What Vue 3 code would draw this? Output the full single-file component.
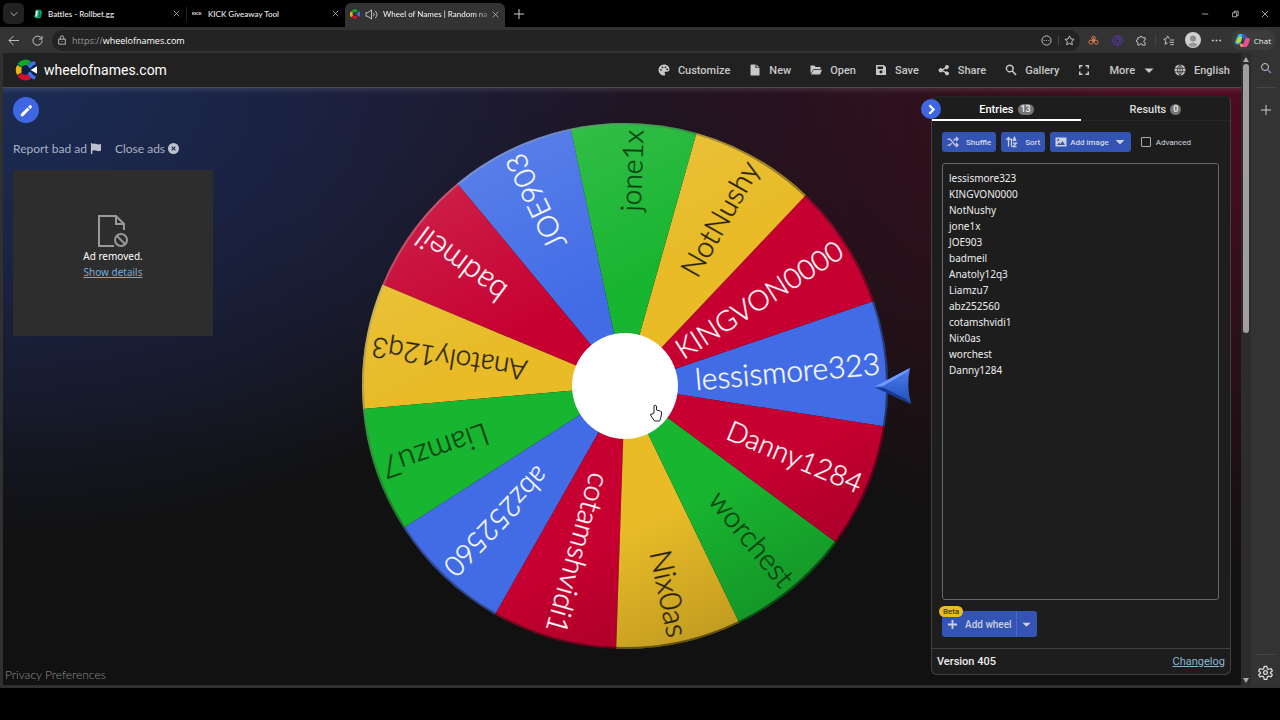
<script setup>
import { ref, computed } from 'vue'

const entries = ref(
  ['lessismore323', 'KINGVON0000', 'NotNushy', 'jone1x', 'JOE903', 'badmeil', 'Anatoly12q3', 'Liamzu7', 'abz252560', 'cotamshvidi1', 'Nix0as', 'worchest', 'Danny1284'].join('\n')
)
const address = ref('wheelofnames.com')
const advanced = ref(false)
const textSizes = [30, 28, 29, 28, 29, 31, 28, 31, 28, 29, 30, 29, 28]
const palette = ['blue', 'red', 'yellow', 'green']
const cx = 625
const cy = 386
const radius = 263
const offset = -5

function point(deg) {
  const a = (deg * Math.PI) / 180
  return `${(cx + radius * Math.cos(a)).toFixed(2)} ${(cy + radius * Math.sin(a)).toFixed(2)}`
}

const slices = computed(() => {
  const names = entries.value.split('\n').filter(Boolean)
  const step = 360 / names.length
  return names.map((name, i) => {
    const mid = offset - i * step
    const last = i === names.length - 1
    return {
      name,
      tone: last ? 'red' : palette[i % 4],
      size: textSizes[i] || 30,
      turn: `rotate(${mid.toFixed(2)} ${cx} ${cy})`,
      d: `M${cx} ${cy}L${point(mid - step / 2)}A${radius} ${radius} 0 0 1 ${point(mid + step / 2)}Z`
    }
  })
})

const nav = [
  { label: 'Customize', d: 'M12 1a11 11 0 0 0 0 22c1.500 0 2.500-1 2.500-2.500 0-1.700-1.300-2-1.300-3.200 0-1 .8-1.800 1.800-1.800h3c3 0 5-2 5-4.500C23 5.500 18.500 1 12 1ZM6 13.500a1.800 1.800 0 1 1 0-3.600 1.800 1.800 0 0 1 0 3.600Zm3-5a1.800 1.800 0 1 1 0-3.600 1.800 1.800 0 0 1 0 3.600Zm6 0a1.800 1.800 0 1 1 0-3.600 1.800 1.800 0 0 1 0 3.600Zm3.500 4a1.800 1.800 0 1 1 0-3.600 1.800 1.800 0 0 1 0 3.600Z' },
  { label: 'New', d: 'M5 1h8v7h8v15H3V3a2 2 0 0 1 2-2Zm10 0L21 7h-6Z' },
  { label: 'Open', d: 'M1 3h8l2 3h10v4H7L2 18H1Zm6 8.500h17L20 21H2Z' },
  { label: 'Save', d: 'M2 2h15.500L22 6.500V22H2Zm3 3v5h11V5Zm7 7.500a3.200 3.200 0 1 0 0 6.400 3.200 3.200 0 0 0 0-6.400Z' },
  { label: 'Share', d: 'M18 2a4 4 0 0 0-3.900 4.900L8.500 10A4 4 0 1 0 8.500 15l5.600 3a4 4 0 1 0 1.300-2.300L9.800 12.600l5.500-3.300A4 4 0 1 0 18 2Z' },
  { label: 'Gallery', d: 'M9.500 1a8 8 0 1 0 4.300 14.700L21 23l2.200-2.200-7-7.200A8 8 0 0 0 9.500 1Zm0 2.800a5.200 5.200 0 1 1 0 10.400 5.200 5.200 0 0 1 0-10.400Z' }
]
</script>

<template>
  <div class="desktop">
    <div class="window">
      <div class="tabstrip">
        <button class="tab-menu" aria-label="Tab actions"><svg viewBox="0 0 12 12" class="line"><path d="M2 4l4 4 4-4" /></svg></button>
        <div class="tab tab-one">
          <svg class="fav" viewBox="0 0 12 12"><path d="M3 1h6l2 3-2 7H4L1 9l2-3Z" fill="#14a578" /><path d="M3 3l3-1-1 6-2 2Z" fill="#c9f2df" /><path d="M8 2v8" stroke="#06553c" /></svg>
          <span>Battles - Rollbet.gg</span>
          <button aria-label="Close tab"><svg viewBox="0 0 10 10" class="line"><path d="M1 1l8 8M9 1L1 9" /></svg></button>
        </div>
        <div class="tab tab-two">
          <span class="kick">KICK</span>
          <span>KICK Giveaway Tool</span>
          <button aria-label="Close tab"><svg viewBox="0 0 10 10" class="line"><path d="M1 1l8 8M9 1L1 9" /></svg></button>
        </div>
        <div class="tab active">
          <svg class="fav" viewBox="0 0 24 24"><path d="M5 18A9 9 0 0 1 5 7" class="arc" stroke="#eeb211" /><path d="M6 6a9 9 0 0 1 11 0" class="arc" stroke="#12a52a" /><path d="M6 18a9 9 0 0 0 11 0" class="arc" stroke="#d50f25" /><path d="M24 5v14l-9-7Z" fill="#4570e8" /></svg>
          <svg class="speaker" viewBox="0 0 14 12"><path d="M1 4h2l4-3v10L3 8H1ZM9 4q2 2 0 4M11 2q4 4 0 8" /></svg>
          <span class="fade">Wheel of Names | Random na</span>
          <button aria-label="Close tab"><svg viewBox="0 0 10 10" class="line"><path d="M1 1l8 8M9 1L1 9" /></svg></button>
        </div>
        <button class="plus" aria-label="New tab"><svg viewBox="0 0 10 10" class="line"><path d="M5 0v10M0 5h10" /></svg></button>
        <div class="controls">
          <button aria-label="Minimize"><svg viewBox="0 0 10 10" class="line"><path d="M1 5h8" /></svg></button>
          <button aria-label="Restore"><svg viewBox="0 0 10 10" class="line"><path d="M2 3.500h5v5H2ZM4 3V1.500h5V7H7.500" /></svg></button>
          <button aria-label="Close"><svg viewBox="0 0 10 10" class="line"><path d="M1 1l8 8M9 1L1 9" /></svg></button>
        </div>
      </div>

      <div class="toolbar">
        <button class="tool" aria-label="Back"><svg viewBox="0 0 12 12" class="line"><path d="M12 6H1M6 1L1 6l5 5" /></svg></button>
        <button class="tool reload" aria-label="Reload"><svg viewBox="0 0 12 12" class="line"><path d="M10.500 4A5 5 0 1 0 11 6M11 1v3.500H7.500" /></svg></button>
        <div class="address">
          <svg viewBox="0 0 12 12" class="line lock"><path d="M2 5h8v6H2ZM4 5V3a2 2 0 0 1 4 0v2M6 7.500v1" /></svg>
          <label for="url">https://</label><input id="url" v-model="address" type="text" />
          <button class="tool" aria-label="More options"><svg viewBox="0 0 12 12" class="line"><circle cx="6" cy="6" r="5" /><path d="M3 6h1M5.500 6h1M8 6h1" /></svg></button>
          <i class="bar"></i>
          <button class="tool" aria-label="Favorite"><svg viewBox="0 0 12 12" class="line"><path d="M6 1l1.500 3.300 3.500.4-2.600 2.400.7 3.600L6 9l-3.100 1.700.7-3.600L1 4.700l3.500-.4Z" /></svg></button>
        </div>
        <div class="extensions">
          <button class="tool" aria-label="Cookie extension"><svg viewBox="0 0 12 12" class="line orange"><circle cx="6" cy="3.500" r="2" /><circle cx="3.200" cy="7.800" r="2.200" /><circle cx="8.800" cy="7.800" r="2.200" /><path d="M6 3v5M4 6h4" /></svg></button>
          <button class="tool" aria-label="Spiral extension"><svg viewBox="0 0 12 12" class="line violet"><circle cx="6" cy="6" r="5" /><path d="M8.500 3v4a2.500 2.500 0 1 1-1-3" /></svg></button>
          <button class="tool" aria-label="Extensions"><svg viewBox="0 0 12 12" class="line"><path d="M2 3h2a1.500 1.500 0 0 1 3 0h3v2.500a1.500 1.500 0 0 0 0 3V11H7a1.500 1.500 0 0 0-3 0H2V8a1.500 1.500 0 0 1 0-3Z" /></svg></button>
          <i class="bar"></i>
          <button class="tool" aria-label="Favorites"><svg viewBox="0 0 12 12" class="line"><path d="M7 4.200L5 1 3.700 4.200.8 4.600l2.200 2-.6 3.600L5 8.500M7.500 5.500H12M7 8h5M8 10.500h4" /></svg></button>
          <button class="tool profile" aria-label="Profile"><svg viewBox="0 0 16 16"><circle cx="8" cy="8" r="8" fill="#d0d0d0" /><circle cx="8" cy="6.500" r="3" fill="#8b8b8b" /><path d="M3 13q5-5 10 0-5 4-10 0Z" fill="#999" /></svg></button>
          <button class="tool" aria-label="Settings and more"><svg viewBox="0 0 12 12"><path d="M1 5.200h2v1.600H1ZM5 5.200h2v1.600H5ZM9 5.200h2v1.600H9Z" fill="#ccc" /></svg></button>
          <button class="chat">
            <svg viewBox="0 0 16 16"><path d="M4 1h5Q7 3 6 8t-4 4Q-1 12 1 7T4 1Z" fill="#2bb7e8" /><path d="M4 4h4L6 10H1Z" fill="#b8dc38" /><path d="M9 1l2 4h3q3 0 1 5t-4 5H7q2-2 3-6t3-4Z" fill="#ec4f9d" /><path d="M8 1h2l2 4q-2 0-3 4Z" fill="#2459e6" /><path d="M5 11l4 1-1 3H7Q5 15 5 11Z" fill="#fa8b62" /></svg>
            Chat
          </button>
        </div>
      </div>

      <div class="viewport">
        <div class="page">
          <header class="site-head">
            <a class="brand" href="#">
              <svg viewBox="0 0 24 24"><circle cx="12" cy="12" r="12" fill="#0b2048" /><path d="M5 16A8 8 0 0 1 5 8" class="arc" stroke="#eeb211" /><path d="M5 7a8 8 0 0 1 11-2" class="arc" stroke="#12a52a" /><path d="M5 17a8 8 0 0 0 11 2" class="arc" stroke="#d50f25" /><path d="M17 6l5-2M17 18l5 3M15 9l3-3M15 15l3 3" stroke="#4570e8" stroke-width="4" /><path d="M24 8v8l-7-4Z" fill="#fff" /></svg>
              <span>wheelofnames.com</span>
            </a>
            <nav>
              <button v-for="item in nav" :key="item.label">
                <svg viewBox="0 0 24 24"><path :d="item.d" fill-rule="evenodd" /></svg>{{ item.label }}
              </button>
              <button aria-label="Fullscreen"><svg viewBox="0 0 24 24"><path d="M2 2h7v3H5v4H2ZM15 2h7v7h-3V5h-4ZM2 15h3v4h4v3H2ZM19 15h3v7h-7v-3h4Z" /></svg></button>
              <button>More<svg viewBox="0 0 24 24"><path d="M3 9h18l-9 9Z" /></svg></button>
              <button><svg viewBox="0 0 24 24"><circle cx="12" cy="12" r="11" /><path d="M1 8.500h22M1 15.500h22M12 1v22M12 1q-10 11 0 22M12 1q10 11 0 22" fill="none" stroke="#222" stroke-width="1.500" /></svg>English</button>
            </nav>
          </header>

          <main>
            <section class="left">
              <button class="edit" aria-label="Edit title"><svg viewBox="0 0 24 24"><path d="M3 17.500V21h3.500L17 10.500 13.500 7ZM14.500 6L18 9.500l2.400-2.400q1-1 0-2l-1.500-1.500q-1-1-2 0Z" /></svg></button>
              <div class="ad-links">
                <a href="#">Report bad ad<svg viewBox="0 0 12 12"><path d="M1 0h1.500v1q2-1 4.500 0t5 0v7.500q-2.500 1-5 0t-4.500 0V12H1Z" /></svg></a>
                <a href="#">Close ads<svg viewBox="0 0 12 12"><circle cx="6" cy="6" r="6" /><path d="M4 4l4 4M8 4L4 8" stroke="#1b294d" stroke-width="1.300" /></svg></a>
              </div>
              <div class="ad">
                <svg viewBox="0 0 32 34"><path d="M17 32H2V2h17l8 8v6M19 2v8h8" /><circle cx="24" cy="26" r="6" /><path d="M20 22l8 8" /></svg>
                <span>Ad removed.</span>
                <a href="#">Show details</a>
              </div>
              <a class="privacy" href="#">Privacy Preferences</a>
            </section>

            <section class="stage">
              <svg class="wheel" viewBox="350 111 571 550" role="img" aria-label="Wheel of names">
                <defs>
                  <linearGradient id="shade" x1="0.250" y1="0" x2="0.750" y2="1">
                    <stop offset="0" stop-color="#fff" stop-opacity="0.140" />
                    <stop offset="0.350" stop-color="#fff" stop-opacity="0" />
                    <stop offset="0.720" stop-color="#000" stop-opacity="0" />
                    <stop offset="1" stop-color="#000" stop-opacity="0.200" />
                  </linearGradient>
                  <linearGradient id="rim" x1="0" y1="0" x2="0.800" y2="0.800">
                    <stop offset="0" stop-color="#fff" stop-opacity="0.400" />
                    <stop offset="0.500" stop-color="#222" stop-opacity="0.400" />
                    <stop offset="1" stop-color="#000" stop-opacity="0.500" />
                  </linearGradient>
                  <linearGradient id="pointer" x1="0" y1="0" x2="0" y2="1">
                    <stop offset="0" stop-color="#4b7cf0" />
                    <stop offset="1" stop-color="#2350b8" />
                  </linearGradient>
                </defs>
                <g v-for="s in slices" :key="s.name" :class="s.tone">
                  <path :d="s.d" />
                </g>
                <circle :cx="cx" :cy="cy" :r="radius" fill="url(#shade)" />
                <circle :cx="cx" :cy="cy" r="262" fill="none" stroke="url(#rim)" stroke-width="2" />
                <g v-for="s in slices" :key="s.name" :class="s.tone">
                  <text :x="cx + 256" :y="cy" dy="0.350em" :font-size="s.size" :transform="s.turn">{{ s.name }}</text>
                </g>
                <circle :cx="cx" :cy="cy" r="53" fill="#fff" />
                <path d="M874 387L910 368Q906 386 911 404Z" fill="url(#pointer)" />
                <path d="M874 387L910 368L907 372L883 386Z" fill="#6f9aff" />
                <path d="M874 387L911 404L906 399L884 388Z" fill="#18398e" />
                <path d="M654 413v-7q1-2 2.500 0v4l4 1q1.500.5 1 3l-1 5-1 2h-5l-4-6q0-1.500 1.500-1Z" fill="#fff" stroke="#222" />
              </svg>
            </section>

            <aside class="panel">
              <button class="toggle" aria-label="Hide panel"><svg viewBox="0 0 12 12"><path d="M4 2l4 4-4 4" /></svg></button>
              <div class="panel-tabs">
                <button class="on">Entries <b>13</b></button>
                <button>Results <b>0</b></button>
              </div>
              <div class="panel-body">
                <div class="actions">
                  <button class="blue-btn"><svg viewBox="0 0 24 24" class="thick"><path d="M1 6h5l10 12h5M1 18h5l3-4M13 9l3-3h5M18 2l4 4-4 4M18 14l4 4-4 4" /></svg>Shuffle</button>
                  <button class="blue-btn"><svg viewBox="0 0 24 24" class="thick"><path d="M5 21V4M1 8l4-5 4 5M11 21V5M14 10l3-7 3 7M15 8h4M14 14h7l-7 7h7" /></svg>Sort</button>
                  <button class="blue-btn image"><svg viewBox="0 0 24 24"><path fill-rule="evenodd" d="M1 3h22v18H1Zm3 15h16l-5-8-4 6-3-3ZM6.500 6a2 2 0 1 0 0 4 2 2 0 0 0 0-4Z" /></svg>Add image<svg viewBox="0 0 24 24"><path d="M3 8h18l-9 9Z" /></svg></button>
                  <label class="advanced"><input v-model="advanced" type="checkbox" />Advanced</label>
                </div>
                <textarea v-model="entries" aria-label="Entries" spellcheck="false"></textarea>
                <div class="add">
                  <span class="beta">Beta</span>
                  <button class="add-main"><svg viewBox="0 0 12 12"><path d="M5 1h2v4h4v2H7v4H5V7H1V5h4Z" /></svg>Add wheel</button>
                  <button class="add-more" aria-label="More wheel options"><svg viewBox="0 0 24 24"><path d="M3 8h18l-9 9Z" /></svg></button>
                </div>
              </div>
              <footer><span>Version 405</span><a href="#">Changelog</a></footer>
            </aside>
          </main>
        </div>

        <div class="scroll"><i class="up"></i><i class="thumb"></i><i class="down"></i></div>
        <div class="rail">
          <button aria-label="Search"><svg viewBox="0 0 12 12" class="line"><circle cx="5" cy="5" r="3.500" /><path d="M7.500 7.500L11 11" stroke="#887be0" stroke-width="1.500" /></svg></button>
          <hr />
          <button aria-label="Add"><svg viewBox="0 0 12 12" class="line"><path d="M6 1v10M1 6h10" /></svg></button>
          <div class="spring"></div>
          <hr />
          <button class="gear" aria-label="Settings"><svg viewBox="0 0 24 24"><circle cx="12" cy="12" r="3" /><path d="M10 2h4l1 4 2 1 4-1 2 3.500-3 2.500v1l3 2.500-2 3.500-4-1-2 1-1 4h-4l-1-4-2-1-4 1-2-3.500L4 13v-1L1 9.500 3 6l4 1 2-1Z" /></svg></button>
        </div>
      </div>
    </div>
  </div>
</template>

<style>
body { margin: 0; background: #000; }
</style>

<style scoped>
* { box-sizing: border-box; }
button { border: 0; padding: 0; margin: 0; background: none; color: inherit; font: inherit; display: flex; align-items: center; justify-content: center; }
svg { display: block; flex: none; }
.desktop { height: 100vh; padding-bottom: 32px; background: #000; font-family: "Open Sans", "Noto Sans", sans-serif; color: #eee; }
.window { height: 100%; display: flex; flex-direction: column; }
.line { width: 10px; height: 10px; fill: none; stroke: #ccc; stroke-width: 1; }
.arc { fill: none; stroke-width: 6; }

.tabstrip { height: 27px; flex: none; display: flex; align-items: center; padding-left: 3px; font-family: Lato, sans-serif; font-size: 8px; background: #000; }
.tab-menu { width: 21px; height: 21px; border-radius: 5px; background: #222; }
.tab { display: flex; align-items: center; height: 24px; gap: 5px; white-space: nowrap; padding-right: 6px; }
.tab button { margin-left: auto; }
.tab button svg { width: 7px; height: 7px; }
.tab-one { width: 162px; padding-left: 9px; }
.tab-two { width: 159px; padding-left: 5px; border-left: 1px solid #222; height: 14px; }
.kick { width: 11px; font-size: 4px; }
.fav { width: 10px; height: 10px; }
.speaker { width: 13px; height: 11px; fill: none; stroke: #ccc; }
.active { width: 160px; background: #333; border-radius: 6px 6px 0 0; align-self: flex-end; padding: 0 7px 2px 5px; }
.fade { flex: none; mask-image: linear-gradient(90deg, #000 88%, #0005); }
.tabstrip span { font-weight: 500; }
.tabstrip .kick { font-weight: 900; }
.plus { width: 27px; height: 24px; }
.controls { margin-left: auto; display: flex; }
.controls button { width: 30px; height: 27px; }
.controls svg { width: 8px; height: 8px; }

.toolbar { height: 26px; flex: none; display: flex; align-items: center; background: #333; padding: 0 4px 0 7px; font-size: 9px; }
.tool { width: 12px; height: 20px; }
.tool svg { width: 11px; height: 11px; }
.reload { margin: 0 9px 0 12px; }
.address { flex: 1; height: 21px; background: #232323; border-radius: 11px; display: flex; align-items: center; padding: 0 4px 0 5px; }
.address label { color: #999; margin-left: 5px; }
.address input { flex: 1; min-width: 0; border: 0; outline: 0; padding: 0; background: none; color: #fff; font: inherit; }
.bar { width: 1px; height: 9px; background: #484848; margin: 0 5px; }
.extensions { display: flex; align-items: center; margin-left: 8px; gap: 12px; }
.extensions .bar { margin: 0 -5px; }
.orange { stroke: #e3804f; }
.violet { stroke: #6b36e0; }
.profile svg { width: 16px; height: 16px; margin: 0 -2px; }
.chat { height: 20px; border-radius: 10px; background: #3c3c3c; padding: 0 5px 0 4px; gap: 4px; margin-left: -4px; font-size: 8px; }
.chat svg { width: 15px; height: 15px; }

.viewport { flex: 1; min-height: 0; display: flex; background: #303030; padding: 0 0 3px 3px; }
.page { flex: 1; min-width: 0; display: flex; flex-direction: column; border-radius: 4px 0 0 0; overflow: hidden; background: #111; }
.site-head { height: 35px; flex: none; display: flex; align-items: center; justify-content: space-between; background: #212121; padding: 0 11px 0 12px; font-family: Roboto, sans-serif; border-bottom: 1px solid #4a4a50; }
.brand { display: flex; align-items: center; gap: 7px; color: #fff; text-decoration: none; font-size: 14px; }
.brand svg { width: 22px; height: 22px; }
nav { display: flex; align-items: center; gap: 19px; }
nav button { gap: 8px; font-size: 11px; font-weight: 500; color: #c8c8c8; }
nav svg { width: 12px; height: 12px; fill: #c8c8c8; }

main { flex: 1; min-height: 0; display: flex; padding: 8px 10px 10px 0; background: linear-gradient(180deg, #ffffff18 0, transparent 6px), radial-gradient(ellipse 52% 76% at 0 0, #1b2c55 0, #1a2549cc 45%, transparent 100%), radial-gradient(ellipse 52% 84% at 100% 0, #500a20 0, #3a0d18aa 45%, transparent 100%), linear-gradient(180deg, #1f1524 0, #111 62%); }
.left { width: 337px; flex: none; display: flex; flex-direction: column; align-items: flex-start; padding: 1px 0 0 10px; font-family: Lato, sans-serif; }
.edit { width: 26px; height: 26px; border-radius: 50%; background: #3f67e4; }
.edit svg { width: 15px; height: 15px; fill: #fff; }
.ad-links { display: flex; gap: 14px; margin: 17px 0 14px; height: 16px; }
.ad-links a { display: flex; align-items: center; gap: 3px; font-size: 12px; color: #aab1c2; text-decoration: none; }
.ad-links svg { width: 11px; height: 11px; fill: #bcc1cc; }
.ad { width: 200px; height: 166px; background: #2d2d2d; display: flex; flex-direction: column; align-items: center; font-family: "Noto Sans", sans-serif; font-size: 10px; line-height: 16px; padding-top: 44px; color: #fff; }
.ad svg { width: 32px; height: 34px; fill: none; stroke: #999; stroke-width: 2; }
.ad a { color: #6fabdf; }
.privacy { margin: auto 0 -7px -8px; color: #909090; font-size: 12px; line-height: 14px; text-decoration: none; font-weight: 300; }
.stage { flex: 1; min-width: 0; display: flex; align-items: center; justify-content: center; }
.wheel { width: 571px; max-width: 100%; height: auto; }
.wheel text { text-anchor: end; font-family: Lato, sans-serif; font-weight: 300; stroke-width: 1px; stroke-opacity: 0.4; }
.blue path { fill: #416ce6; }
.red path { fill: #c60030; }
.yellow path { fill: #e8bb27; }
.green path { fill: #18b530; }
.blue text, .red text { fill: #fff; stroke: #fff; }
.yellow text { fill: #241d08; stroke: #241d08; }
.green text { fill: #083d11; stroke: #083d11; }

.panel { width: 300px; flex: none; position: relative; display: flex; flex-direction: column; background: #1d1d1d; border: 1px solid #414141; border-top-color: #242424; border-radius: 6px; font-family: Roboto, sans-serif; }
.toggle { position: absolute; left: -11px; top: 2px; width: 20px; height: 20px; border-radius: 50%; background: #3f67e4; }
.toggle svg { width: 13px; height: 13px; fill: none; stroke: #fff; stroke-width: 2; }
.panel-tabs { display: flex; height: 24px; flex: none; font-size: 11px; font-weight: 500; }
.panel-tabs button { flex: 1; gap: 4px; border-bottom: 1px solid #252525; color: #ddd; padding-top: 1px; }
.panel-tabs .on { border-bottom: 2px solid #fff; color: #fff; padding-top: 2px; }
.panel-tabs b { background: #757575; color: #eee; font-size: 9px; font-weight: 500; line-height: 11px; border-radius: 6px; padding: 0 3px; }
.panel-body { flex: 1; min-height: 0; display: flex; flex-direction: column; padding: 11px 11px 11px 10px; }
.actions { display: flex; align-items: center; gap: 5px; margin-bottom: 11px; font-size: 8px; font-weight: 500; color: #d4d8e6; }
.blue-btn { height: 20px; background: #3454b4; border-radius: 3px; padding: 0 5px; gap: 7px; white-space: nowrap; }
.blue-btn svg { width: 12px; height: 12px; fill: #ccd0e0; }
.blue-btn .thick { fill: none; stroke: #ccd0e0; stroke-width: 2.500; }
.image { gap: 3px; }
.image svg:last-child { margin-left: 2px; }
.advanced { display: flex; align-items: center; gap: 5px; margin-left: 5px; font-weight: 400; }
.advanced input { appearance: none; width: 10px; height: 10px; margin: 0; border: 1px solid #aaa; border-radius: 1px; }
textarea { flex: 1; min-height: 0; resize: none; outline: 0; background: #1d1d1d; border: 1px solid #666; border-radius: 3px; padding: 6px; color: #eee; font-family: "Noto Sans", sans-serif; font-size: 10px; line-height: 16px; }
.add { display: flex; position: relative; align-self: flex-start; margin-top: 11px; height: 26px; background: #3454b4; border-radius: 3px; font-size: 10px; font-weight: 500; color: #ccd0e0; }
.add svg { width: 11px; height: 11px; fill: #ccd0e0; }
.add-main { padding: 0 4px 0 5px; gap: 7px; }
.add-more { width: 21px; border-left: 1px solid #4b69c1; }
.beta { position: absolute; left: -3px; top: -5px; background: #e8bb27; color: #222; border-radius: 6px; font-size: 8px; font-weight: 400; line-height: 11px; padding: 0 4px; }
footer { height: 26px; flex: none; border-top: 1px solid #414141; display: flex; align-items: center; justify-content: space-between; padding: 0 5px; font-size: 11px; font-weight: 500; }
footer a { color: #87b9d4; font-weight: 400; }

.scroll { width: 10px; display: flex; flex-direction: column; align-items: center; padding: 4px 0 2px; background: #2c2c2c; }
.up, .down { border: 3px solid transparent; height: 0; }
.up { border-bottom: 5px solid #aaa; border-top: 0; }
.down { border-top: 5px solid #aaa; border-bottom: 0; margin-top: auto; }
.thumb { width: 6px; height: 43%; margin-top: 2px; border-radius: 3px; background: #9f9f9f; }
.rail { width: 29px; display: flex; flex-direction: column; align-items: center; background: #333; padding: 5px 0 2px; }
.rail button { width: 24px; height: 20px; }
.rail svg { width: 12px; height: 12px; }
.rail hr { width: 18px; border: 0; border-top: 1px solid #484848; margin: 9px 0 12px; }
.spring { flex: 1; }
.rail .gear { height: 22px; margin-top: -6px; }
.gear svg { width: 15px; height: 15px; fill: none; stroke: #ddd; stroke-width: 2; }
</style>
